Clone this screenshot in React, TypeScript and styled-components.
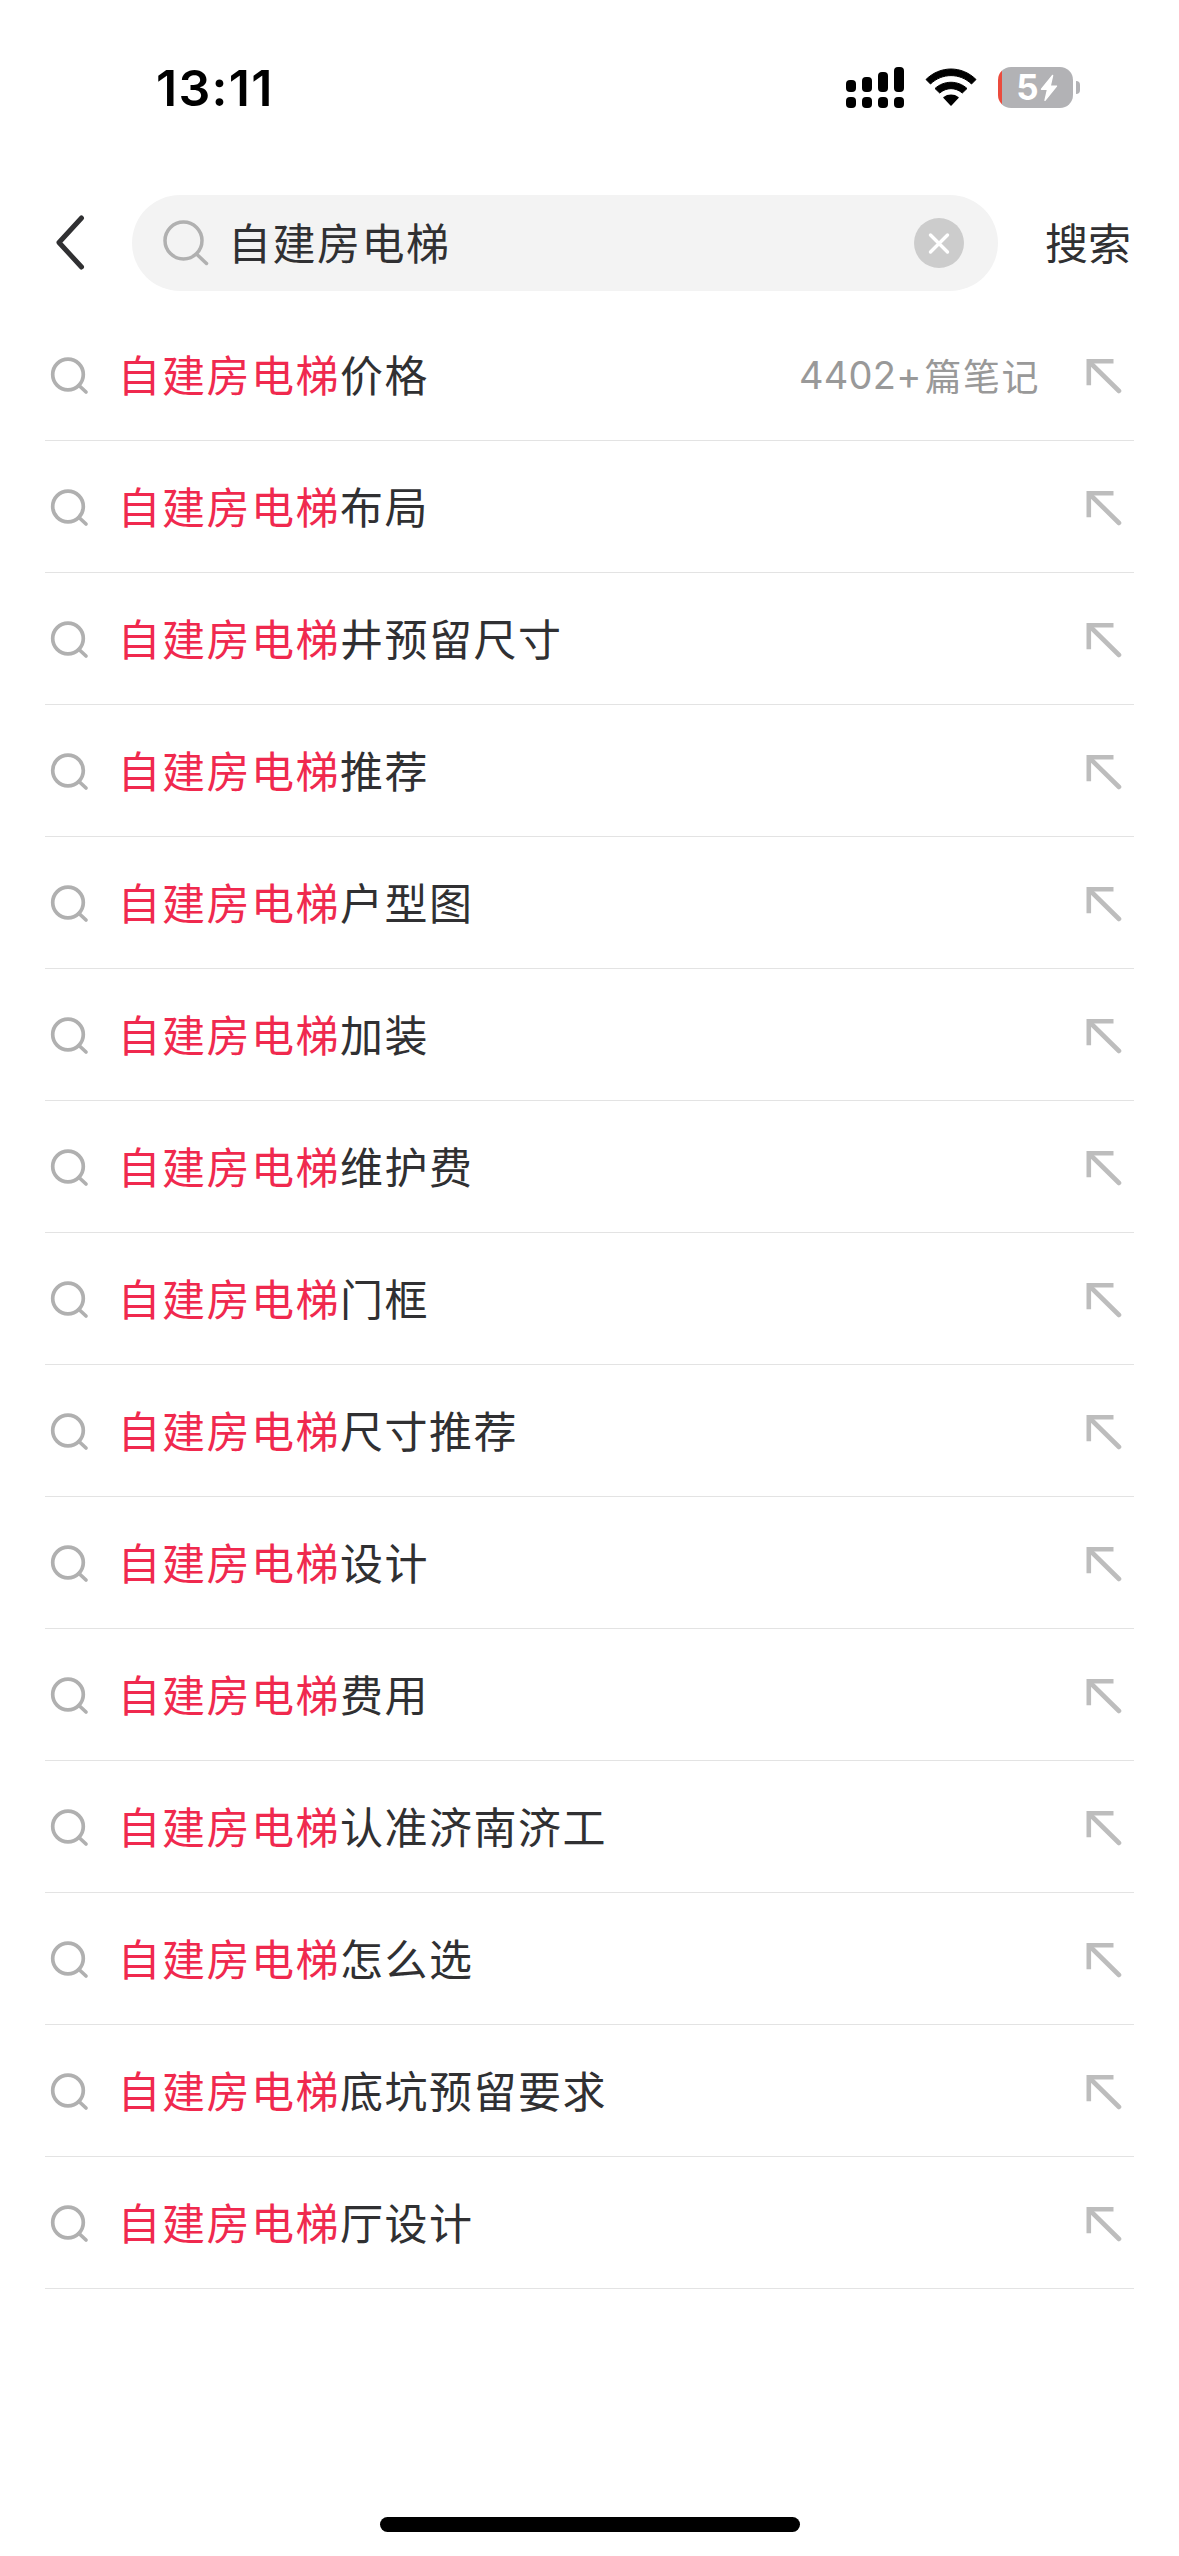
import React from "react";
import styled, { createGlobalStyle } from "styled-components";

const GlobalStyle = createGlobalStyle`
  html, body { margin: 0; padding: 0; background: #fff; }
  * { box-sizing: border-box; }
`;

const Screen = styled.main`
  width: 1179px;
  height: 2556px;
  display: flex;
  flex-direction: column;
  overflow: hidden;
  background: #fff;
  color: #303032;
  font-family: "Noto Sans CJK SC", sans-serif;
`;

const StatusBar = styled.header`
  height: 195px;
  padding: 58px 99px 0 156px;
  display: flex;
  justify-content: space-between;
  align-items: flex-start;
  color: #000;
`;

const Clock = styled.time`
  font: 600 50px/60px Inter, sans-serif;
  letter-spacing: 1.3px;
`;

const StatusIcons = styled.div`
  display: flex;
  align-items: flex-start;
  gap: 21px;
  padding-top: 9px;
`;

const Battery = styled.div`
  display: flex;
  align-items: center;
  gap: 3px;
`;

const BatteryBody = styled.div`
  width: 75px;
  height: 41px;
  border-radius: 13px;
  display: flex;
  align-items: center;
  justify-content: center;
  gap: 1px;
  padding-left: 3px;
  background: linear-gradient(90deg, #eb4b3d 4px, #b2b2b5 4px);
  color: #fff;
  font: 700 35px/41px Inter, sans-serif;
`;

const BatteryCap = styled.span`
  width: 4px;
  height: 13px;
  border-radius: 0 5px 5px 0;
  background: #b2b2b5;
`;

const SearchBar = styled.div`
  height: 96px;
  display: flex;
  align-items: center;
  padding: 0 48px 0 54px;
`;

const IconButton = styled.button`
  display: flex;
  padding: 0;
  border: 0;
  background: none;
`;

const Field = styled.div`
  width: 866px;
  height: 96px;
  margin-left: 46px;
  padding: 0 34px 0 29px;
  display: flex;
  align-items: center;
  border-radius: 48px;
  background: #f3f3f3;
`;

const Query = styled.span`
  flex: 1;
  margin-left: 17px;
  padding-bottom: 4px;
  font-size: 43px;
  line-height: 64px;
  letter-spacing: 1.5px;
`;

const SubmitButton = styled.button`
  margin-left: 47px;
  padding: 0 0 4px;
  border: 0;
  background: none;
  color: #303032;
  font: 400 43px/64px "Noto Sans CJK SC", sans-serif;
  white-space: nowrap;
`;

const List = styled.ul`
  list-style: none;
  margin: 18px 45px 0;
  padding: 0;
`;

const Row = styled.li`
  height: 132px;
  display: flex;
  align-items: center;
  padding: 0 11px 0 4px;
  border-bottom: 1px solid #e3e3e3;
`;

const Label = styled.span`
  flex: 1;
  margin-left: 24.5px;
  padding-bottom: 4px;
  font-size: 43px;
  line-height: 64px;
  letter-spacing: 1.5px;
`;

const Match = styled.span`
  color: #f0294e;
`;

const Count = styled.span`
  display: flex;
  gap: 3px;
  margin: 0 45px 0 0;
  color: #999;
  font: 400 37px/56px "Noto Sans CJK SC", sans-serif;
  letter-spacing: 1.5px;
`;

const CountNumber = styled.span`
  font-family: Inter, sans-serif;
  font-size: 38px;
  letter-spacing: 0.2px;
`;

const HomeIndicator = styled.div`
  width: 420px;
  height: 15px;
  margin: auto auto 24px;
  border-radius: 8px;
  background: #000;
`;

const SignalIcon = () => (
  <svg width="58" height="41" viewBox="0 0 58 41">
    {[13, 10, 5, 0].map((top, i) => (
      <g key={top}>
        <rect x={i * 16} y={top} width="10" height={25 - top} rx="4" />
        <rect x={i * 16} y="30" width="10" height="11" rx="4" />
      </g>
    ))}
  </svg>
);

const WifiIcon = () => (
  <svg width="52" height="41" viewBox="0 0 52 41">
    <path d="M1 12.5C15-1.5 37-1.5 51 12.5L46.5 17C35 5.8 17 5.8 5.5 17Z" stroke="#000" strokeWidth="1" strokeLinejoin="round" />
    <path d="M10 21.5C19 13.2 33 13.2 42 21.5L37.3 26C30.5 20.2 21.5 20.2 14.7 26Z" stroke="#000" strokeWidth="1" strokeLinejoin="round" />
    <path d="M19 30.5C23 27.4 29 27.4 33 30.5L26 38Z" stroke="#000" strokeWidth="1.5" strokeLinejoin="round" />
  </svg>
);

const BoltIcon = () => (
  <svg width="18" height="28" viewBox="0 0 18 28">
    <path d="M12.6 1.5 1.5 15.2H7.6L5 26.3 16.5 12.1H10.2Z" fill="#fff" stroke="#fff" strokeWidth="1.4" strokeLinejoin="round" />
  </svg>
);

const BackIcon = () => (
  <svg width="32" height="56" viewBox="0 0 32 56" fill="none">
    <path d="M27.5 3 5 27.5 27.5 52" stroke="#303032" strokeWidth="5" strokeLinecap="round" strokeLinejoin="round" />
  </svg>
);

const MagnifierIcon = () => (
  <svg width="50" height="50" viewBox="0 0 50 50" fill="none" stroke="#b0b0b0" strokeWidth="3.5" strokeLinecap="round">
    <circle cx="22.5" cy="22.5" r="18.5" />
    <path d="M36 36.5 45.5 45.5" />
  </svg>
);

const RowMagnifierIcon = () => (
  <svg width="44" height="44" viewBox="0 0 44 44" fill="none" stroke="#b0b0b0" strokeWidth="3.7" strokeLinecap="round">
    <circle cx="19" cy="21.5" r="15.3" />
    <path d="M30 32.5 37 39" />
  </svg>
);

const ClearIcon = () => (
  <svg width="50" height="50" viewBox="0 0 50 50">
    <circle cx="25" cy="25" r="25" fill="#ccc" />
    <path d="M16.5 17 33.5 34M33.5 17 16.5 34" stroke="#fff" strokeWidth="3.4" strokeLinecap="round" />
  </svg>
);

const FillArrowIcon = () => (
  <svg width="38" height="38" viewBox="0 0 38 38" fill="none" stroke="#bdbdbd" strokeWidth="4.6">
    <path d="M28.5 5.3H3.8V29.3" />
    <path d="M4.5 6 34 35" strokeLinecap="round" />
  </svg>
);

const query = "自建房电梯";

const suggestions: { rest: string; count?: string }[] = [
  { rest: "价格", count: "4402+" },
  { rest: "布局" },
  { rest: "井预留尺寸" },
  { rest: "推荐" },
  { rest: "户型图" },
  { rest: "加装" },
  { rest: "维护费" },
  { rest: "门框" },
  { rest: "尺寸推荐" },
  { rest: "设计" },
  { rest: "费用" },
  { rest: "认准济南济工" },
  { rest: "怎么选" },
  { rest: "底坑预留要求" },
  { rest: "厅设计" },
];

export default function App() {
  return (
    <Screen>
      <GlobalStyle />
      <StatusBar>
        <Clock>13:11</Clock>
        <StatusIcons>
          <SignalIcon />
          <WifiIcon />
          <Battery>
            <BatteryBody>
              5<BoltIcon />
            </BatteryBody>
            <BatteryCap />
          </Battery>
        </StatusIcons>
      </StatusBar>
      <SearchBar>
        <IconButton aria-label="返回">
          <BackIcon />
        </IconButton>
        <Field>
          <MagnifierIcon />
          <Query>{query}</Query>
          <IconButton aria-label="清除">
            <ClearIcon />
          </IconButton>
        </Field>
        <SubmitButton>搜索</SubmitButton>
      </SearchBar>
      <List>
        {suggestions.map(({ rest, count }) => (
          <Row key={rest}>
            <RowMagnifierIcon />
            <Label>
              <Match>{query}</Match>
              {rest}
            </Label>
            {count && (
              <Count>
                <CountNumber>{count}</CountNumber>篇笔记
              </Count>
            )}
            <FillArrowIcon />
          </Row>
        ))}
      </List>
      <HomeIndicator />
    </Screen>
  );
}
